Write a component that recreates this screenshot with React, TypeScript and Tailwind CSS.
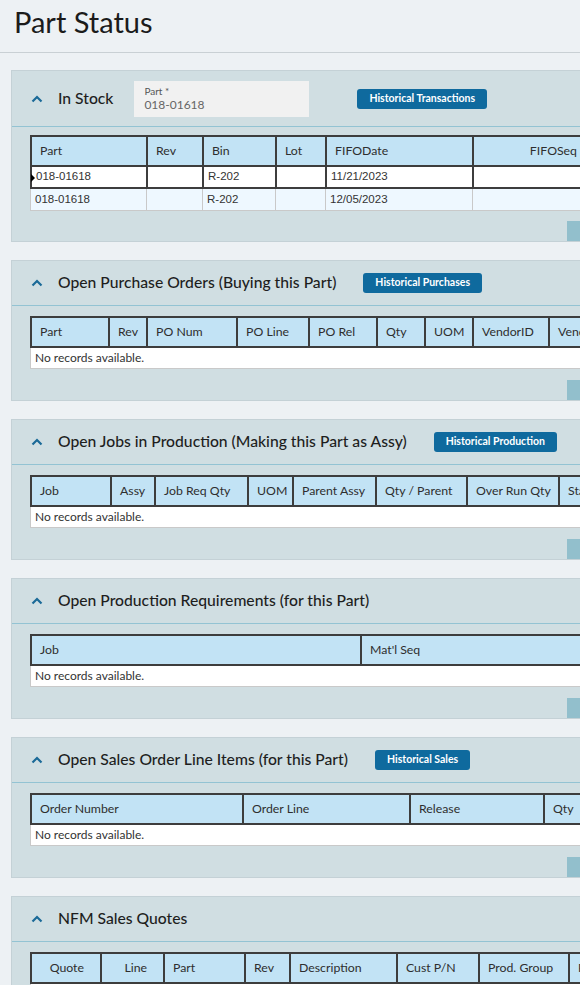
import React from "react";

type Col = { label: string; w: string; align?: "right" };

const sans = "font-['Lato','Liberation_Sans',sans-serif]";

function Chevron() {
  return (
    <svg width="12" height="8" viewBox="0 0 12 8" className="shrink-0" aria-hidden>
      <path d="M1.5 6.5 L6 2 L10.5 6.5" fill="none" stroke="#1b6a98" strokeWidth="2.2" />
    </svg>
  );
}

function HistoryButton({ label, className = "" }: { label: string; className?: string }) {
  return (
    <button
      className={`h-[20px] shrink-0 rounded-[3px] bg-[#0f6a9e] px-[12px] text-[10.5px] font-bold text-white ${className}`}
    >
      {label}
    </button>
  );
}

function GridHead({ cols }: { cols: Col[] }) {
  return (
    <div className="flex h-[32px] w-max border-y-2 border-l-2 border-[#3d3d3d] bg-[#c2e3f5] text-[12.3px] text-[#2e2e2e]">
      {cols.map((c) => (
        <div
          key={c.label}
          className={`flex shrink-0 items-center border-r-2 border-[#3d3d3d] ${c.w} ${
            c.align === "right" ? "justify-end pr-[16px]" : "pl-[8px]"
          }`}
        >
          {c.label}
        </div>
      ))}
    </div>
  );
}

function EmptyRow() {
  return (
    <div className="flex h-[21px] w-[620px] items-center border-x border-b border-[#c9c9c9] bg-white pl-[4px] text-[12px] text-[#333]">
      No records available.
    </div>
  );
}

function Panel({
  title,
  button,
  tall,
  extra,
  children,
}: {
  title: string;
  button?: string;
  tall?: boolean;
  extra?: React.ReactNode;
  children: React.ReactNode;
}) {
  return (
    <section className="mb-[18px] ml-[11px] w-[640px] border border-[#c4d1d6] bg-[#d0dee2]">
      <div
        className={`flex items-center border-b border-[#93c3d3] pl-[19px] ${
          tall ? "h-[56px]" : "h-[45px]"
        }`}
      >
        <Chevron />
        <h2 className="ml-[15px] shrink-0 text-[15.7px] font-medium text-[#1e1e1e]">{title}</h2>
        {extra}
        {button && <HistoryButton label={button} className="ml-[27px]" />}
      </div>
      <div className={`pl-[18px] ${tall ? "pt-[8px]" : "pt-[10px]"}`}>{children}</div>
      <div className={`flex ${tall ? "mt-[10px]" : "mt-[11px]"}`}>
        <div className="ml-[555px] h-[20px] w-[60px] bg-[#92bfcc]" />
      </div>
    </section>
  );
}

const stockCols: Col[] = [
  { label: "Part", w: "w-[116px]" },
  { label: "Rev", w: "w-[56px]" },
  { label: "Bin", w: "w-[73px]" },
  { label: "Lot", w: "w-[50px]" },
  { label: "FIFODate", w: "w-[147px]" },
  { label: "FIFOSeq", w: "w-[121px]", align: "right" },
  { label: "OnHand", w: "w-[90px]" },
];

const stockRows = [
  { part: "018-01618", bin: "R-202", date: "11/21/2023" },
  { part: "018-01618", bin: "R-202", date: "12/05/2023" },
];

const poCols: Col[] = [
  { label: "Part", w: "w-[78px]" },
  { label: "Rev", w: "w-[38px]" },
  { label: "PO Num", w: "w-[90px]" },
  { label: "PO Line", w: "w-[72px]" },
  { label: "PO Rel", w: "w-[68px]" },
  { label: "Qty", w: "w-[48px]" },
  { label: "UOM", w: "w-[48px]" },
  { label: "VendorID", w: "w-[76px]" },
  { label: "Vendor Name", w: "w-[110px]" },
];

const jobCols: Col[] = [
  { label: "Job", w: "w-[80px]" },
  { label: "Assy", w: "w-[44px]" },
  { label: "Job Req Qty", w: "w-[93px]" },
  { label: "UOM", w: "w-[45px]" },
  { label: "Parent Assy", w: "w-[83px]" },
  { label: "Qty / Parent", w: "w-[91px]" },
  { label: "Over Run Qty", w: "w-[92px]" },
  { label: "Status", w: "w-[90px]" },
];

const reqCols: Col[] = [
  { label: "Job", w: "w-[330px]" },
  { label: "Mat'l Seq", w: "w-[290px]" },
];

const soCols: Col[] = [
  { label: "Order Number", w: "w-[212px]" },
  { label: "Order Line", w: "w-[167px]" },
  { label: "Release", w: "w-[134px]" },
  { label: "Qty", w: "w-[110px]" },
];

const quoteCols: Col[] = [
  { label: "Quote", w: "w-[70px]", align: "right" },
  { label: "Line", w: "w-[63px]", align: "right" },
  { label: "Part", w: "w-[81px]" },
  { label: "Rev", w: "w-[45px]" },
  { label: "Description", w: "w-[107px]" },
  { label: "Cust P/N", w: "w-[82px]" },
  { label: "Prod. Group", w: "w-[90px]" },
  { label: "Price", w: "w-[80px]" },
];

export default function App() {
  return (
    <div className={`h-[985px] w-[580px] overflow-hidden bg-[#edf1f4] ${sans}`}>
      <header className="flex h-[53px] items-center border-b border-[#c9d0d4] pb-[9px] pl-[14px]">
        <h1 className="text-[29px] font-normal text-[#1b1b1b]">Part Status</h1>
      </header>

      <div className="pt-[17px]">
        <Panel
          title="In Stock"
          tall
          extra={
            <>
              <div className="ml-[21px] flex h-[36px] w-[175px] shrink-0 flex-col justify-center bg-[#f1f1f1] pl-[10px] leading-none">
                <span className="text-[10px] text-[#555]">Part *</span>
                <span className="mt-[3px] text-[12px] text-[#666]">018-01618</span>
              </div>
              <HistoryButton label="Historical Transactions" className="ml-[48px]" />
            </>
          }
        >
          <GridHead cols={stockCols} />
          {stockRows.map((r, i) => {
            const sel = i === 0;
            const cell = sel
              ? "border-r-2 border-[#3d3d3d]"
              : "border-r border-[#c9c9c9]";
            return (
              <div
                key={i}
                className={`flex h-[22px] w-max font-['Liberation_Sans',sans-serif] text-[11.5px] text-[#333] ${
                  sel
                    ? "border-b-2 border-l-2 border-[#3d3d3d] bg-white"
                    : "border-b border-l border-[#c9c9c9] bg-[#eef8ff]"
                }`}
              >
                {stockCols.map((c, j) => {
                  const val = j === 0 ? r.part : j === 2 ? r.bin : j === 4 ? r.date : "";
                  return (
                    <div
                      key={c.label}
                      className={`relative flex shrink-0 items-center pl-[4px] ${c.w} ${cell}`}
                    >
                      {sel && j === 0 && (
                        <span className="absolute left-[-1px] top-[7px] h-0 w-0 border-y-[4px] border-l-[4px] border-y-transparent border-l-black" />
                      )}
                      {val}
                    </div>
                  );
                })}
              </div>
            );
          })}
        </Panel>

        <Panel title="Open Purchase Orders (Buying this Part)" button="Historical Purchases">
          <GridHead cols={poCols} />
          <EmptyRow />
        </Panel>

        <Panel title="Open Jobs in Production (Making this Part as Assy)" button="Historical Production">
          <GridHead cols={jobCols} />
          <EmptyRow />
        </Panel>

        <Panel title="Open Production Requirements (for this Part)">
          <GridHead cols={reqCols} />
          <EmptyRow />
        </Panel>

        <Panel title="Open Sales Order Line Items (for this Part)" button="Historical Sales">
          <GridHead cols={soCols} />
          <EmptyRow />
        </Panel>

        <Panel title="NFM Sales Quotes">
          <GridHead cols={quoteCols} />
          <EmptyRow />
        </Panel>
      </div>
    </div>
  );
}
